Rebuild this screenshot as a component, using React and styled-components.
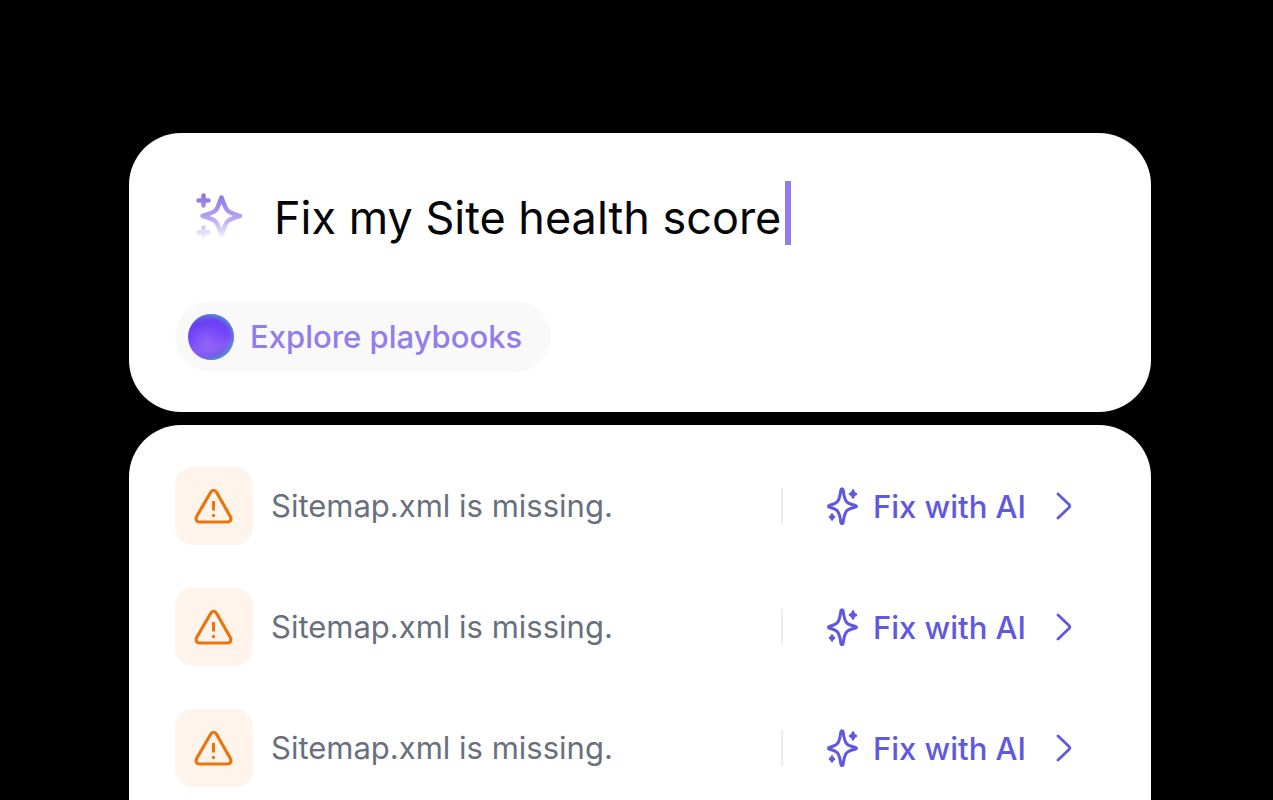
import React, { useState } from "react";
import styled, { createGlobalStyle } from "styled-components";

const GlobalStyle = createGlobalStyle`
  * {
    box-sizing: border-box;
  }

  body {
    margin: 0;
    background: #000;
    font-family: Inter, "Liberation Sans", sans-serif;
  }
`;

const Page = styled.main`
  display: flex;
  flex-direction: column;
  gap: 13px;
  min-height: 100vh;
  padding: 133px 122px 0 129px;
  background: #000;
`;

const Card = styled.section`
  background: #fff;
  border-radius: 52px;
`;

const PromptCard = styled(Card)`
  padding: 48px 46px 40px;
`;

const IssuesCard = styled(Card)`
  flex: 1;
  padding: 42px 79px 14px 46px;
  border-radius: 52px 52px 0 0;
`;

const PromptRow = styled.div`
  display: flex;
  align-items: center;
  height: 64px;
  margin-bottom: 56px;
  padding-left: 16px;
`;

const PromptInput = styled.input`
  field-sizing: content;
  margin-left: 29px;
  padding: 10px 0 0;
  border: 0;
  outline: 0;
  background: transparent;
  color: #050505;
  font-family: inherit;
  font-size: 45px;
  line-height: 56px;
`;

const Caret = styled.span`
  width: 6px;
  height: 64px;
  margin-left: 4px;
  background: #937ceb;
`;

const PlaybooksButton = styled.button`
  display: flex;
  align-items: center;
  gap: 16px;
  height: 71px;
  padding: 0 29px 0 13px;
  border: 0;
  border-radius: 36px;
  background: #f9f9fa;
  color: #937ceb;
  font-family: inherit;
  font-size: 31px;
  font-weight: 500;
  cursor: pointer;
`;

const IssueList = styled.ul`
  display: flex;
  flex-direction: column;
  gap: 43px;
  margin: 0;
  padding: 0;
  list-style: none;
`;

const IssueRow = styled.li`
  display: flex;
  align-items: center;
`;

const WarningTile = styled.span`
  display: flex;
  align-items: center;
  justify-content: center;
  width: 78px;
  height: 78px;
  border-radius: 18px;
  background: #fff4eb;
`;

const IssueText = styled.span`
  flex: 1;
  margin-left: 18px;
  color: #69707d;
  font-size: 31px;
  line-height: 40px;
`;

const FixButton = styled.button`
  display: flex;
  align-items: center;
  height: 36px;
  padding: 0 0 0 44px;
  border: 0;
  border-left: 2px solid #ececf0;
  background: transparent;
  color: #6059df;
  font-family: inherit;
  font-size: 31px;
  font-weight: 500;
  cursor: pointer;
`;

const FixLabel = styled.span`
  margin: 0 30px 0 14px;
`;

function PromptSparkles() {
  return (
    <svg width="54" height="54" viewBox="-3 -7 54 54" fill="none" aria-hidden="true">
      <defs>
        <linearGradient id="fade" gradientUnits="userSpaceOnUse" x1="0" y1="0" x2="0" y2="48">
          <stop offset="0" stopColor="#8971e4" />
          <stop offset="0.5" stopColor="#b2a3ef" />
          <stop offset="1" stopColor="#ffffff" />
        </linearGradient>
      </defs>
      <path
        d="M27.500 4.500C30.500 12 31 15 33.500 17.500C36 20 39 20.500 46 23C39 25.500 36 26 33.500 28.500C31 31 30.500 34 27.500 42C24.500 34 24 31 21.500 28.500C19 26 16 25.500 8.500 23C16 20.500 19 20 21.500 17.500C24 15 24.500 12 27.500 4.500Z"
        stroke="url(#fade)"
        strokeWidth="4.500"
        strokeLinejoin="round"
      />
      <path
        d="M9.500 2.500V12.500M4.500 7.500H14.500M9.500 34.500V44.500M4.500 39.500H14.500"
        stroke="url(#fade)"
        strokeWidth="4.500"
        strokeLinecap="round"
      />
    </svg>
  );
}

function PlaybookOrb() {
  return (
    <svg width="46" height="46" viewBox="0 0 46 46" aria-hidden="true">
      <defs>
        <linearGradient id="orb" x1="0.35" y1="0" x2="0.6" y2="1">
          <stop offset="0" stopColor="#6150dc" />
          <stop offset="0.2" stopColor="#6a40f5" />
          <stop offset="0.5" stopColor="#7444f8" />
          <stop offset="0.75" stopColor="#8659f5" />
          <stop offset="1" stopColor="#6457da" />
        </linearGradient>
        <radialGradient id="orbGlow" cx="0.4" cy="0.62" r="0.42">
          <stop offset="0" stopColor="#9468f8" stopOpacity="0.8" />
          <stop offset="1" stopColor="#9468f8" stopOpacity="0" />
        </radialGradient>
        <radialGradient id="orbTop" cx="0.44" cy="0.62" r="0.64">
          <stop offset="0.8" stopColor="#4a9fd0" stopOpacity="0" />
          <stop offset="1" stopColor="#4a9fd0" stopOpacity="0.9" />
        </radialGradient>
        <radialGradient id="orbBottom" cx="0.38" cy="0.38" r="0.68">
          <stop offset="0.8" stopColor="#4a9fd0" stopOpacity="0" />
          <stop offset="1" stopColor="#4a9fd0" stopOpacity="0.9" />
        </radialGradient>
      </defs>
      <circle cx="23" cy="23" r="23" fill="url(#orb)" />
      <circle cx="23" cy="23" r="23" fill="url(#orbGlow)" />
      <circle cx="23" cy="23" r="23" fill="url(#orbTop)" />
      <circle cx="23" cy="23" r="23" fill="url(#orbBottom)" />
    </svg>
  );
}

function WarningIcon() {
  return (
    <svg width="42" height="42" viewBox="0 0 42 42" fill="none" stroke="#e9750f" aria-hidden="true">
      <path
        d="M17.700 7.200C19 4.600 22 4.600 23.500 7.200L37.200 31.200C38.800 34.200 37.500 37 34.500 37H6.500C3.500 37 2.200 34.200 3.800 31.200Z"
        strokeWidth="3.200"
        strokeLinejoin="round"
      />
      <path d="M20.500 16V25.500" strokeWidth="3" />
      <circle cx="20.500" cy="30.500" r="1.700" fill="#e9750f" stroke="none" />
    </svg>
  );
}

function FixSparkles() {
  return (
    <svg width="32" height="40" viewBox="0 0 32 40" fill="none" stroke="currentColor" aria-hidden="true">
      <path
        d="M15 2.800Q16 2.800 16.200 4.200Q17.200 12.500 19.500 15.500Q21.500 18 28 19.200Q29.500 19.500 29.500 20.200Q29.500 21 28 21.200Q21.500 22.500 19.500 25Q17.200 28 16.200 36Q16 37.500 15 37.500Q14 37.500 13.800 36Q12.800 28 10.500 25Q8.500 22.500 2.500 21.200Q1.500 21 1.500 20.200Q1.500 19.500 2.500 19.200Q8.500 18 10.500 15.500Q12.800 12.500 13.800 4.200Q14 2.800 15 2.800Z"
        strokeWidth="3"
        strokeLinejoin="round"
      />
      <path
        d="M26 4.500Q26.500 7.500 29 8Q26.500 8.500 26 11.500Q25.500 8.500 23 8Q25.500 7.500 26 4.500Z"
        fill="currentColor"
        strokeWidth="2.500"
        strokeLinejoin="round"
      />
      <path
        d="M5 28.500Q5.500 30.500 7 31Q5.500 31.500 5 33.500Q4.500 31.500 3 31Q4.500 30.500 5 28.500Z"
        fill="currentColor"
        strokeWidth="2.500"
        strokeLinejoin="round"
      />
    </svg>
  );
}

function Chevron() {
  return (
    <svg width="16" height="28" viewBox="0 0 16 28" fill="none" aria-hidden="true">
      <path
        d="M2 2L13 12.500Q14.500 14 13 15.500L2 26"
        stroke="currentColor"
        strokeWidth="2.800"
        strokeLinecap="round"
      />
    </svg>
  );
}

const issues = [
  { id: 1, text: "Sitemap.xml is missing." },
  { id: 2, text: "Sitemap.xml is missing." },
  { id: 3, text: "Sitemap.xml is missing." },
];

export default function App() {
  const [prompt, setPrompt] = useState("Fix my Site health score");

  return (
    <>
      <GlobalStyle />
      <Page>
        <PromptCard>
          <PromptRow>
            <PromptSparkles />
            <PromptInput
              type="text"
              aria-label="Prompt"
              value={prompt}
              onChange={(e) => setPrompt(e.target.value)}
            />
            <Caret />
          </PromptRow>
          <PlaybooksButton type="button">
            <PlaybookOrb />
            Explore playbooks
          </PlaybooksButton>
        </PromptCard>
        <IssuesCard>
          <IssueList>
            {issues.map((issue) => (
              <IssueRow key={issue.id}>
                <WarningTile>
                  <WarningIcon />
                </WarningTile>
                <IssueText>{issue.text}</IssueText>
                <FixButton type="button">
                  <FixSparkles />
                  <FixLabel>Fix with AI</FixLabel>
                  <Chevron />
                </FixButton>
              </IssueRow>
            ))}
          </IssueList>
        </IssuesCard>
      </Page>
    </>
  );
}
